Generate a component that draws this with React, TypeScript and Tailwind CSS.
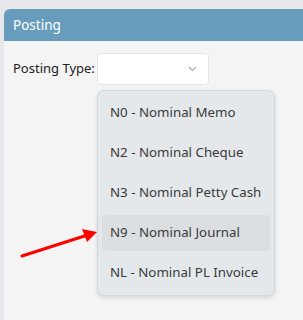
import React from "react";

const items = [
  "N0 - Nominal Memo",
  "N2 - Nominal Cheque",
  "N3 - Nominal Petty Cash",
  "N9 - Nominal Journal",
  "NL - Nominal PL Invoice",
];

export default function App() {
  return (
    <div
      className="w-[303px] h-[320px] overflow-hidden bg-[#e6e8eb] pl-[4px] pt-[9px] relative"
      style={{ fontFamily: '"Noto Sans", "Open Sans", sans-serif' }}
    >
      <div className="w-[320px] h-[320px] bg-[#f4f4f4] rounded-tl-[6px] overflow-hidden">
        <div className="h-[32px] bg-[#679cbd] text-white text-[13.5px] flex items-center pl-[9px]">
          Posting
        </div>
        <div className="flex items-center pl-[9px] pt-[12px]">
          <span className="text-[13px] text-[#222] w-[84px] whitespace-nowrap">Posting Type:</span>
          <div className="relative">
            <div className="w-[112px] h-[32px] bg-white rounded-[4px] border border-[#e4e6e9] flex items-center justify-end pr-[10px]">
              <svg width="9" height="6" viewBox="0 0 9 6" className="mr-[1px]">
                <path d="M1 1 L4.5 4.5 L8 1" fill="none" stroke="#a4acb8" strokeWidth="1.2" />
              </svg>
            </div>
            <div className="absolute left-0 top-[37px] w-[178px] bg-[#e5e8eb] border border-[#d3d8dd] rounded-[7px] shadow-[0_2px_4px_rgba(0,0,0,0.12)] p-[4px] flex flex-col gap-[4px]">
              {items.map((t, i) => (
                <div
                  key={t}
                  className={`h-[36px] flex items-center pl-[8px] text-[13.3px] text-[#3a3a3a] rounded-[4px] whitespace-nowrap ${
                    i === 3 ? "bg-[#dcdfe2]" : ""
                  }`}
                >
                  {t}
                </div>
              ))}
            </div>
          </div>
        </div>
      </div>
      <svg className="absolute left-0 top-0 pointer-events-none" width="303" height="320">
        <line x1="22" y1="256" x2="86" y2="235.5" stroke="#ff0000" strokeWidth="3" strokeLinecap="round" />
        <polygon points="97,232 82,229 87,242" fill="#ff0000" />
      </svg>
    </div>
  );
}
